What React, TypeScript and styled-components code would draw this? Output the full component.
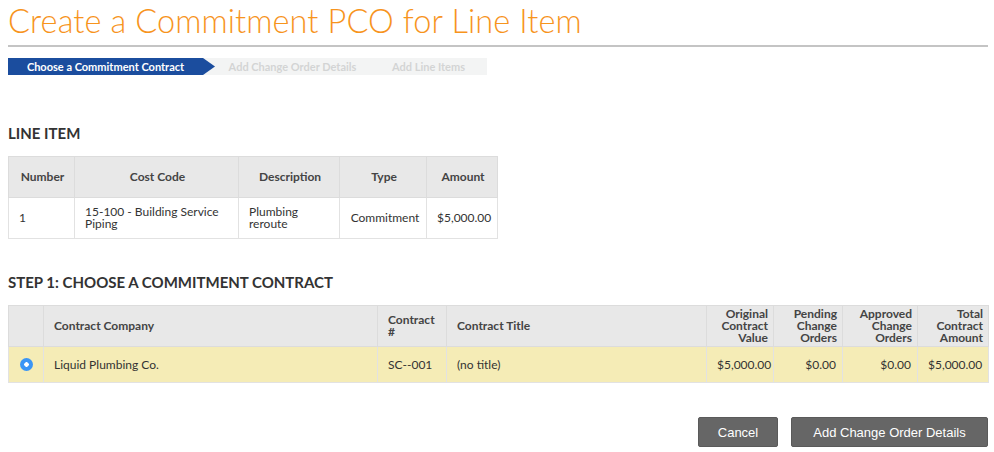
import styled, { createGlobalStyle } from "styled-components";

const GlobalStyle = createGlobalStyle`
  body {
    margin: 0;
    background: #fff;
    font-family: Lato, "Open Sans", sans-serif;
    color: #333;
  }
`;

type Align = "left" | "center" | "right";

const lineItemCols: Array<{ label: string; width: number; align: Align }> = [
  { label: "Number", width: 66, align: "center" },
  { label: "Cost Code", width: 164, align: "center" },
  { label: "Description", width: 101, align: "center" },
  { label: "Type", width: 87, align: "center" },
  { label: "Amount", width: 71, align: "center" },
];

const contractCols: Array<{ label: string; width: number; align: Align }> = [
  { label: "", width: 35, align: "center" },
  { label: "Contract Company", width: 334, align: "left" },
  { label: "Contract #", width: 69, align: "left" },
  { label: "Contract Title", width: 260, align: "left" },
  { label: "Original Contract Value", width: 67, align: "right" },
  { label: "Pending Change Orders", width: 69, align: "right" },
  { label: "Approved Change Orders", width: 75, align: "right" },
  { label: "Total Contract Amount", width: 71, align: "right" },
];

export default function App() {
  return (
    <>
      <GlobalStyle />
      <Page>
        <Title>Create a Commitment PCO for Line Item</Title>
        <Rule />
        <Steps>
          <ActiveStep>Choose a Commitment Contract</ActiveStep>
          <Step $width={155}>Add Change Order Details</Step>
          <Step $width={117}>Add Line Items</Step>
        </Steps>

        <SectionTitle $top={48}>LINE ITEM</SectionTitle>
        <Table style={{ width: 489 }}>
          <colgroup>
            {lineItemCols.map((c) => (
              <col key={c.label} style={{ width: c.width }} />
            ))}
          </colgroup>
          <thead>
            <tr>
              {lineItemCols.map((c) => (
                <Th key={c.label} $align={c.align} $height={41}>
                  {c.label}
                </Th>
              ))}
            </tr>
          </thead>
          <tbody>
            <tr>
              <Td $align="left" $height={41}>1</Td>
              <Td $align="left">15-100 - Building Service Piping</Td>
              <Td $align="left">Plumbing reroute</Td>
              <Td $align="center">Commitment</Td>
              <Td $align="center">$5,000.00</Td>
            </tr>
          </tbody>
        </Table>

        <SectionTitle $top={33}>STEP 1: CHOOSE A COMMITMENT CONTRACT</SectionTitle>
        <Table style={{ width: 980 }}>
          <colgroup>
            {contractCols.map((c, i) => (
              <col key={i} style={{ width: c.width }} />
            ))}
          </colgroup>
          <thead>
            <tr>
              {contractCols.map((c, i) => (
                <Th key={i} $align={c.align} $height={41} $tight>
                  {c.label}
                </Th>
              ))}
            </tr>
          </thead>
          <tbody>
            <SelectedRow>
              <Td $align="center" $height={36}>
                <Radio />
              </Td>
              <Td $align="left">Liquid Plumbing Co.</Td>
              <Td $align="left">SC--001</Td>
              <Td $align="left">(no title)</Td>
              <Td $align="right">$5,000.00</Td>
              <Td $align="right">$0.00</Td>
              <Td $align="right">$0.00</Td>
              <Td $align="right">$5,000.00</Td>
            </SelectedRow>
          </tbody>
        </Table>

        <Actions>
          <Button $width={80}>Cancel</Button>
          <Button $width={197}>Add Change Order Details</Button>
        </Actions>
      </Page>
    </>
  );
}

const Page = styled.div`
  width: 980px;
  padding: 0 6px 0 8px;
`;

const Title = styled.h1`
  margin: 0;
  padding-top: 2px;
  font-family: Lato, sans-serif;
  font-weight: 300;
  font-size: 32.5px;
  line-height: 38px;
  color: #f7941d;
  letter-spacing: 0.1px;
`;

const Rule = styled.div`
  height: 2px;
  margin-top: 5px;
  background: #c4c4c4;
`;

const Steps = styled.div`
  display: flex;
  width: 479px;
  height: 17px;
  margin-top: 11px;
  background: #f3f4f4;
`;

const ActiveStep = styled.div`
  width: 207px;
  padding-right: 12px;
  box-sizing: border-box;
  background: #1b4d9e;
  clip-path: polygon(0 0, 195px 0, 207px 50%, 195px 100%, 0 100%);
  color: #fff;
  font-size: 11px;
  font-weight: 700;
  line-height: 17px;
  text-align: center;
`;

const Step = styled.div<{ $width: number }>`
  width: ${(p) => p.$width}px;
  color: #d3d4d4;
  font-size: 11px;
  font-weight: 700;
  line-height: 17px;
  text-align: center;
`;

const SectionTitle = styled.h2<{ $top: number }>`
  margin: ${(p) => p.$top}px 0 13px;
  font-size: 15px;
  font-weight: 700;
  line-height: 20px;
  color: #333;
`;

const Table = styled.table`
  border-collapse: collapse;
  table-layout: fixed;
  font-size: 12px;
`;

const Th = styled.th<{ $align: Align; $height: number; $tight?: boolean }>`
  height: ${(p) => p.$height}px;
  padding: 0 ${(p) => (p.$tight ? 5 : 8)}px 0 10px;
  box-sizing: border-box;
  background: #e8e8e8;
  border: 1px solid #dcdcdc;
  text-align: ${(p) => p.$align};
  font-weight: 700;
  color: #444;
  line-height: 12px;
  vertical-align: middle;
`;

const Td = styled.td<{ $align: Align; $height?: number }>`
  ${(p) => (p.$height ? `height: ${p.$height}px;` : "")}
  padding: 0 6px 0 10px;
  box-sizing: border-box;
  border: 1px solid #e2e2e2;
  text-align: ${(p) => p.$align};
  line-height: 12px;
  color: #333;
  vertical-align: middle;
`;

const SelectedRow = styled.tr`
  background: #f5ecb6;
`;

const Radio = styled.span`
  display: inline-block;
  width: 13px;
  height: 13px;
  border-radius: 50%;
  background: radial-gradient(circle, #fff 0 2px, #3a95f5 2.5px);
  vertical-align: middle;
  margin-left: -4px;
`;

const Actions = styled.div`
  display: flex;
  justify-content: flex-end;
  gap: 13px;
  margin-top: 34px;
`;

const Button = styled.button<{ $width: number }>`
  width: ${(p) => p.$width}px;
  height: 30px;
  border: 1px solid #5a5a5a;
  border-radius: 2px;
  background: #666;
  color: #fff;
  font-family: "Liberation Sans", Arial, sans-serif;
  font-size: 13px;
  cursor: pointer;
`;
